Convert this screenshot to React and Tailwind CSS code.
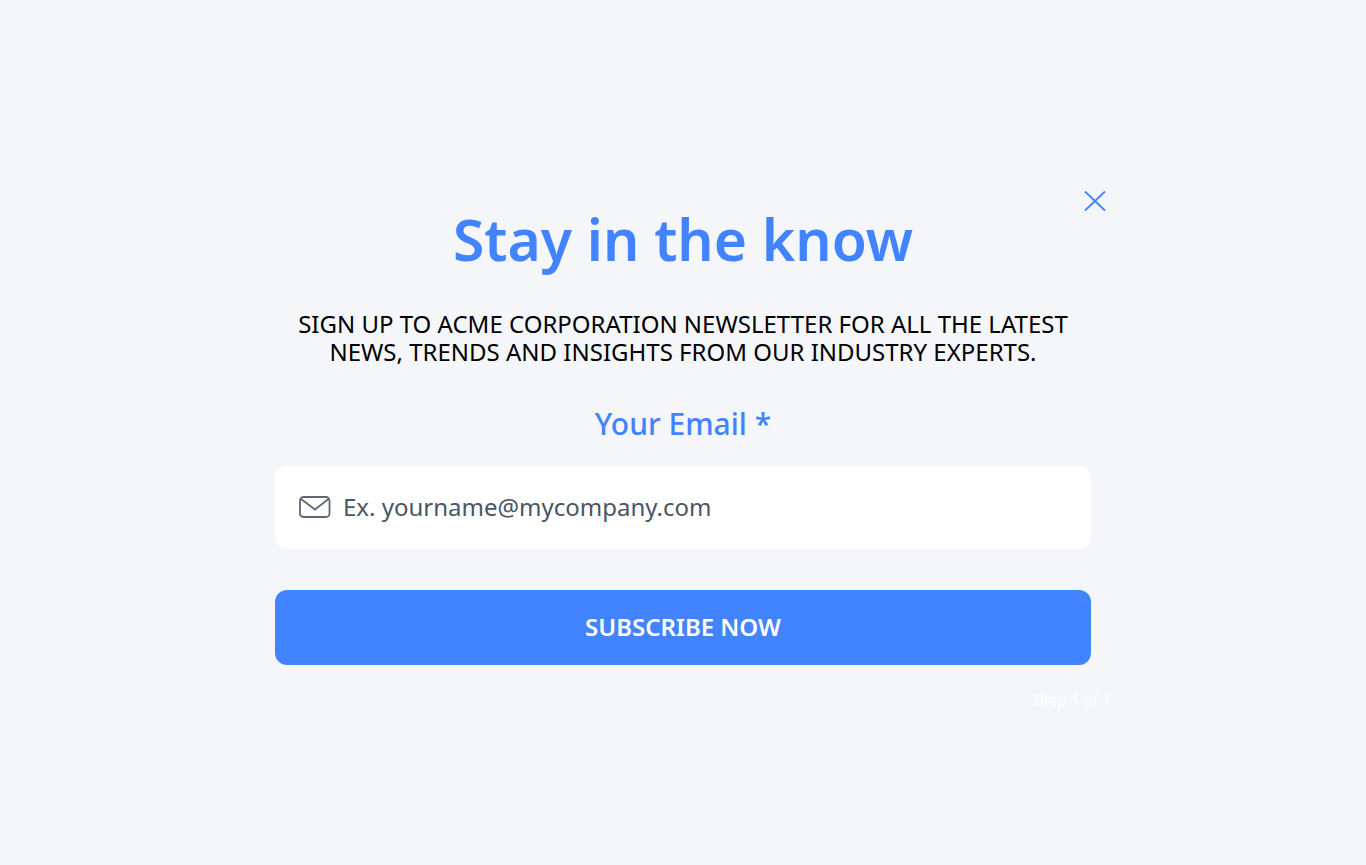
import React, { useState } from "react";

const App = () => {
  const [email, setEmail] = useState("");
  const [open, setOpen] = useState(true);

  const handleSubmit = (event) => {
    event.preventDefault();
    setEmail("");
  };

  return (
    <div className="min-h-screen pt-9 bg-[#f4f6fa] flex items-center justify-center font-['Noto_Sans',sans-serif]">
      {open && (
        <div className="w-full max-w-[856px] flex flex-col">
          <div className="flex justify-end px-1">
            <button
              type="button"
              aria-label="Close"
              onClick={() => setOpen(false)}
              className="text-[#4284ff] cursor-pointer"
            >
              <svg
                className="w-6 h-6"
                viewBox="0 0 24 24"
                fill="none"
                stroke="currentColor"
                strokeWidth="1.8"
              >
                <path d="M2 2.5 22 21.5M22 2.5 2 21.5" />
              </svg>
            </button>
          </div>

          <form onSubmit={handleSubmit} className="px-5 flex flex-col">
            <h1 className="text-[57px] leading-[53px] font-semibold text-center text-[#4284ff]">
              Stay in the know
            </h1>
            <p className="mt-11 text-2xl leading-7 text-center text-black uppercase">
              Sign up to Acme Corporation newsletter for all the latest news,
              trends and insights from our industry experts.
            </p>

            <label
              htmlFor="email"
              className="mt-10 text-3xl font-medium text-center text-[#4284ff]"
            >
              Your Email *
            </label>
            <div className="mt-6 h-[83px] px-6 flex items-center gap-3 bg-white rounded-xl">
              <svg
                className="w-8 h-6 shrink-0 text-[#5f6777]"
                viewBox="0 0 32 24"
                fill="none"
                stroke="currentColor"
                strokeWidth="1.8"
                strokeLinejoin="round"
              >
                <rect x="1" y="2" width="29.5" height="20" rx="3.5" />
                <path d="M2 4 16 14.5 29.5 4" />
              </svg>
              <input
                id="email"
                type="email"
                value={email}
                onChange={(e) => setEmail(e.target.value)}
                placeholder="Ex. yourname@mycompany.com"
                className="w-full text-2xl text-gray-600 placeholder:text-gray-600 focus:outline-none"
                required
              />
            </div>

            <button
              type="submit"
              className="mt-[41px] h-[75px] rounded-xl bg-[#4284ff] text-white text-2xl font-semibold uppercase cursor-pointer"
            >
              Subscribe now
            </button>
          </form>

          <p className="mt-6 text-base text-right text-white font-[Roboto,sans-serif]">
            Step 1 of 1
          </p>
        </div>
      )}
    </div>
  );
};

export default App;
